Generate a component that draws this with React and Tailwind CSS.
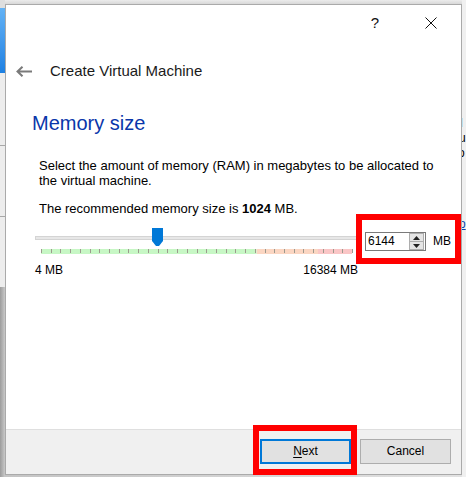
export default function App() {
  const ticks = Array.from({ length: 33 }, (_, i) => 6 + i * (311 / 32));
  return (
    <div className="relative w-[466px] h-[477px] flex overflow-hidden bg-[#e6e6e6] font-['Liberation_Sans',Arial,sans-serif] text-black">
      {/* background desktop strip on the left */}
      <div className="w-[5px] h-full flex flex-col shrink-0">
        <div className="h-[8px] bg-[#dedede]" />
        <div className="h-[65px] bg-gradient-to-b from-[#62b2f5] to-[#1c80e2]" />
        <div className="h-[72px] bg-[#ededed]" />
        <div className="h-px bg-[#a8a8a8]" />
        <div className="h-[70px] bg-[#ededed]" />
        <div className="h-px bg-[#a8a8a8]" />
        <div className="h-[70px] bg-[#ededed]" />
        <div className="flex-1 bg-gradient-to-r from-[#9c9c9c] to-[#c9c9c9]" />
      </div>

      {/* window column */}
      <div className="w-[457px] shrink-0 flex flex-col">
        <div className="h-[4px] bg-gradient-to-b from-[#ececec] to-[#d8d8d8]" />
        <div className="h-[471px] flex flex-col border border-[#aaaaaa] bg-white">
          {/* title bar */}
          <div className="h-[36px] flex items-center justify-end pr-[19px]">
            <div className="w-[22px] text-center text-[15px] leading-[20px] text-[#111]">?</div>
            <div className="w-[22px] ml-[34px] flex justify-center">
              <svg width="12" height="12" viewBox="0 0 12 12">
                <path d="M0.5 0.5 L11.5 11.5 M11.5 0.5 L0.5 11.5" stroke="#111" strokeWidth="1" fill="none" />
              </svg>
            </div>
          </div>

          {/* header */}
          <div className="h-[60px] flex items-center pl-[10px]">
            <svg width="16" height="11" viewBox="0 0 16 11">
              <path d="M16 5.5 H1.5 M6.5 0.7 L1.5 5.5 L6.5 10.3" stroke="#7a7a7a" strokeWidth="2" fill="none" />
            </svg>
            <div className="ml-[18px] text-[15px] leading-[20px] text-[#1a1a1a]">Create Virtual Machine</div>
          </div>

          {/* content */}
          <div className="flex-1 flex flex-col">
            <div className="ml-[26px] mt-[12px] text-[20px] leading-[20px] text-[#0936aa]">Memory size</div>
            <div className="ml-[33px] mt-[25px] text-[13px] leading-[15px]">
              Select the amount of memory (RAM) in megabytes to be allocated to
              <br />
              the virtual machine.
            </div>
            <div className="ml-[33px] mt-[13px] text-[13px] leading-[15px]">
              The recommended memory size is <span className="font-bold">1024</span> MB.
            </div>

            {/* slider row */}
            <div className="ml-[29px] mt-[12px] flex items-start">
              <div className="relative w-[323px] h-[27px]">
                <div className="absolute left-0 top-[8px] w-[323px] h-[4px] bg-[#e7e7e7] border border-[#d4d4d4]" />
                <svg className="absolute left-0 top-0" width="323" height="27" viewBox="0 0 323 27">
                  <rect x="6" y="21" width="215.7" height="5" fill="#c7f7c5" />
                  <rect x="221.7" y="21" width="61.3" height="5" fill="#fbd6c2" />
                  <rect x="283" y="21" width="34" height="5" fill="#fac6c6" />
                  {ticks.map((x, i) => (
                    <rect key={i} x={Math.round(x)} y="21" width="1" height="4" fill="#9d9a8e" />
                  ))}
                  <path d="M117 0 H128 V13 L124 18 H121 L117 13 Z" fill="#0078d7" />
                </svg>
              </div>
              <div className="ml-[7px] mt-[4px] w-[61px] h-[19px] border border-[#7a7a7a] bg-white flex items-center justify-between">
                <span className="pl-[2px] text-[12px] leading-[15px]">6144</span>
                <div className="mr-[1px] w-[15px] h-[17px] border border-[#adadad] bg-[#e5e5e5] flex flex-col">
                  <div className="flex-1 flex items-center justify-center border-b border-[#adadad]">
                    <svg width="7" height="4" viewBox="0 0 7 4"><path d="M0 4 L3.5 0 L7 4 Z" fill="#222" /></svg>
                  </div>
                  <div className="flex-1 flex items-center justify-center">
                    <svg width="7" height="4" viewBox="0 0 7 4"><path d="M0 0 L3.5 4 L7 0 Z" fill="#222" /></svg>
                  </div>
                </div>
              </div>
              <div className="ml-[7px] mt-[6px] text-[12px] leading-[15px]">MB</div>
            </div>

            <div className="ml-[29px] mt-[8px] w-[323px] flex justify-between text-[12px] leading-[15px]">
              <span>4 MB</span>
              <span>16384 MB</span>
            </div>
          </div>

          {/* footer */}
          <div className="h-[45px] border-t border-[#dfdfdf] bg-[#f0f0f0] flex items-start justify-end pt-[9px] pr-[10px] gap-[9px]">
            <button className="w-[91px] h-[25px] border-2 border-[#0078d7] bg-[#e1e1e1] text-[12px] leading-[15px] text-black">
              <span className="underline underline-offset-2">N</span>ext
            </button>
            <button className="w-[91px] h-[25px] border border-[#adadad] bg-[#e1e1e1] text-[12px] leading-[15px] text-black">
              Cancel
            </button>
          </div>
        </div>
        <div className="flex-1 bg-gradient-to-r from-[#c4c4c4] to-[#e2e2e2]" />
      </div>

      {/* right background strip */}
      <div className="w-[4px] shrink-0 h-full bg-[#f0f0f0] overflow-hidden flex flex-col text-[12px] leading-[15px]">
        <div className="mt-[116px] -ml-[2px]">l</div>
        <div className="-ml-[3px]">u</div>
        <div className="-ml-[4px]">o</div>
        <div className="mt-[56px] -ml-[3px] text-[#0645ad] underline">o</div>
      </div>

      {/* red annotation boxes */}
      <div className="absolute left-[356px] top-[214px] w-[105px] h-[50px] border-[6px] border-[#ff0000]" />
      <div className="absolute left-[253px] top-[425px] w-[104px] h-[50px] border-[6px] border-[#ff0000]" />
    </div>
  );
}
